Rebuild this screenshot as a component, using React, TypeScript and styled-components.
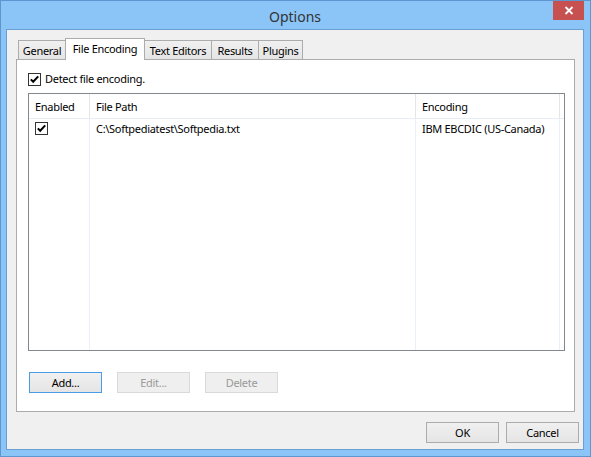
import styled, { createGlobalStyle } from 'styled-components';

const GlobalStyle = createGlobalStyle`
	html, body {
		margin: 0;
		padding: 0;
		background: #ffffff;
	}
	body {
		font-family: 'Noto Sans', 'Liberation Sans', sans-serif;
		font-size: 11px;
		letter-spacing: -0.3px;
		color: #000000;
	}
	* {
		box-sizing: border-box;
	}
`;

type Tab = { label: string; width: number; active?: boolean };

const tabs: Tab[] = [
	{ label: 'General', width: 48 },
	{ label: 'File Encoding', width: 80, active: true },
	{ label: 'Text Editors', width: 68 },
	{ label: 'Results', width: 48 },
	{ label: 'Plugins', width: 45 },
];

type Column = { title: string; width?: number };

const columns: Column[] = [
	{ title: 'Enabled', width: 61 },
	{ title: 'File Path', width: 326 },
	{ title: 'Encoding', width: 144 },
	{ title: '' },
];

const rows = [{ enabled: true, path: 'C:\\Softpediatest\\Softpedia.txt', encoding: 'IBM EBCDIC (US-Canada)' }];

const CheckBox = ({ checked }: { checked: boolean }) => (
	<StyledCheck>
		{checked && (
			<svg width="11" height="11" viewBox="0 0 11 11">
				<path d="M1.8 5.4 L4.2 7.8 L9.2 2.4" fill="none" stroke="#000" strokeWidth="2" />
			</svg>
		)}
	</StyledCheck>
);

export default function App() {
	return (
		<>
			<GlobalStyle />
			<Window>
				<TitleBar>
					<TitleSpacer />
					<Title>Options</Title>
					<CloseButton>
						<svg width="10" height="9" viewBox="0 0 10 9">
							<path d="M1.5 1 L8.5 8 M8.5 1 L1.5 8" stroke="#fff" strokeWidth="1.8" />
						</svg>
					</CloseButton>
				</TitleBar>
				<Client>
					<TabArea>
						<TabStrip>
							{tabs.map((t) => (
								<TabItem key={t.label} $width={t.width} $active={t.active}>
									{t.label}
								</TabItem>
							))}
						</TabStrip>
						<TabPanel>
							<CheckRow>
								<CheckBox checked />
								<span>Detect file encoding.</span>
							</CheckRow>
							<ListView>
								<ListHeader>
									{columns.map((c, i) => (
										<HeaderCell key={i} $width={c.width}>
											{c.title}
										</HeaderCell>
									))}
								</ListHeader>
								<ListBody>
									<BodyColumn $width={columns[0].width}>
										{rows.map((r, i) => (
											<Cell key={i}>
												<CellCheck>
													<CheckBox checked={r.enabled} />
												</CellCheck>
											</Cell>
										))}
									</BodyColumn>
									<BodyColumn $width={columns[1].width}>
										{rows.map((r, i) => (
											<Cell key={i}>{r.path}</Cell>
										))}
									</BodyColumn>
									<BodyColumn $width={columns[2].width}>
										{rows.map((r, i) => (
											<Cell key={i}>{r.encoding}</Cell>
										))}
									</BodyColumn>
									<BodyColumn />
								</ListBody>
							</ListView>
							<PanelButtons>
								<Button $focused>Add...</Button>
								<Button disabled>Edit...</Button>
								<Button disabled>Delete</Button>
							</PanelButtons>
						</TabPanel>
					</TabArea>
					<DialogButtons>
						<Button>OK</Button>
						<Button>Cancel</Button>
					</DialogButtons>
				</Client>
			</Window>
		</>
	);
}

const Window = styled.div`
	width: 591px;
	height: 457px;
	display: flex;
	flex-direction: column;
	background: #8bc5f8;
	border: 1px solid #5e97d0;
	padding: 0 6px 6px 5px;
`;

const TitleBar = styled.div`
	height: 28px;
	display: flex;
	align-items: flex-start;
`;

const TitleSpacer = styled.div`
	width: 31px;
`;

const Title = styled.div`
	flex: 1;
	text-align: center;
	font-size: 14px;
	letter-spacing: 0;
	line-height: 31px;
	color: #333333;
`;

const CloseButton = styled.div`
	width: 31px;
	height: 19px;
	background: #c75050;
	display: flex;
	align-items: center;
	justify-content: center;
`;

const Client = styled.div`
	flex: 1;
	display: flex;
	flex-direction: column;
	background: #f0f0f0;
	border: 1px solid #6a9fd4;
	padding: 8px 4px 6px 9px;
`;

const TabArea = styled.div`
	flex: 1;
	display: flex;
	flex-direction: column;
	margin-right: 4px;
`;

const TabStrip = styled.div`
	height: 22px;
	display: flex;
	align-items: flex-end;
	padding-left: 2px;
	margin-bottom: -1px;
	position: relative;
	z-index: 1;
`;

const TabItem = styled.div<{ $width: number; $active?: boolean }>`
	width: ${(p) => p.$width}px;
	height: ${(p) => (p.$active ? 22 : 20)}px;
	margin-left: -1px;
	border: 1px solid #acacac;
	border-bottom: ${(p) => (p.$active ? 'none' : '1px solid #acacac')};
	background: ${(p) => (p.$active ? '#ffffff' : 'linear-gradient(#f0f0f0, #e5e5e5)')};
	position: relative;
	z-index: ${(p) => (p.$active ? 2 : 1)};
	display: flex;
	align-items: center;
	justify-content: center;
	padding-bottom: ${(p) => (p.$active ? 2 : 0)}px;
	white-space: nowrap;
	&:first-child {
		margin-left: 0;
	}
`;

const TabPanel = styled.div`
	flex: 1;
	display: flex;
	flex-direction: column;
	background: #ffffff;
	border: 1px solid #acacac;
	padding: 12px 9px 0 11px;
`;

const CheckRow = styled.div`
	height: 14px;
	display: flex;
	align-items: center;
	gap: 4px;
	line-height: 14px;
`;

const StyledCheck = styled.span`
	width: 13px;
	height: 13px;
	flex: none;
	border: 1px solid #333333;
	background: #ffffff;
	display: flex;
	align-items: center;
	justify-content: center;
`;

const ListView = styled.div`
	height: 258px;
	margin-top: 7px;
	border: 1px solid #828790;
	display: flex;
	flex-direction: column;
`;

const ListHeader = styled.div`
	height: 25px;
	display: flex;
	border-bottom: 1px solid #e5edf7;
`;

const HeaderCell = styled.div<{ $width?: number }>`
	width: ${(p) => (p.$width ? `${p.$width}px` : 'auto')};
	flex: ${(p) => (p.$width ? 'none' : 1)};
	border-right: ${(p) => (p.$width ? '1px solid #e5e5e5' : 'none')};
	padding: 0 6px;
	display: flex;
	align-items: center;
	white-space: nowrap;
`;

const ListBody = styled.div`
	flex: 1;
	display: flex;
`;

const BodyColumn = styled.div<{ $width?: number }>`
	width: ${(p) => (p.$width ? `${p.$width}px` : 'auto')};
	flex: ${(p) => (p.$width ? 'none' : 1)};
	border-right: ${(p) => (p.$width ? '1px solid #e8eff8' : 'none')};
`;

const Cell = styled.div`
	height: 19px;
	padding: 0 6px;
	display: flex;
	align-items: center;
	white-space: nowrap;
`;

const CellCheck = styled.div`
	margin-top: -1px;
`;

const PanelButtons = styled.div`
	display: flex;
	gap: 15px;
	margin-top: 21px;
	padding-left: 1px;
`;

const Button = styled.button<{ $focused?: boolean }>`
	width: 73px;
	height: 21px;
	padding: 0;
	font-family: inherit;
	font-size: 11px;
	letter-spacing: inherit;
	color: #000000;
	border: 1px solid ${(p) => (p.$focused ? '#4a9be6' : '#acacac')};
	background: linear-gradient(#f0f0f0, #e5e5e5);
	&:disabled {
		color: #9a9a9a;
		border-color: #d9d9d9;
		background: #efefef;
	}
`;

const DialogButtons = styled.div`
	display: flex;
	justify-content: flex-end;
	gap: 7px;
	margin-top: 10px;
`;
